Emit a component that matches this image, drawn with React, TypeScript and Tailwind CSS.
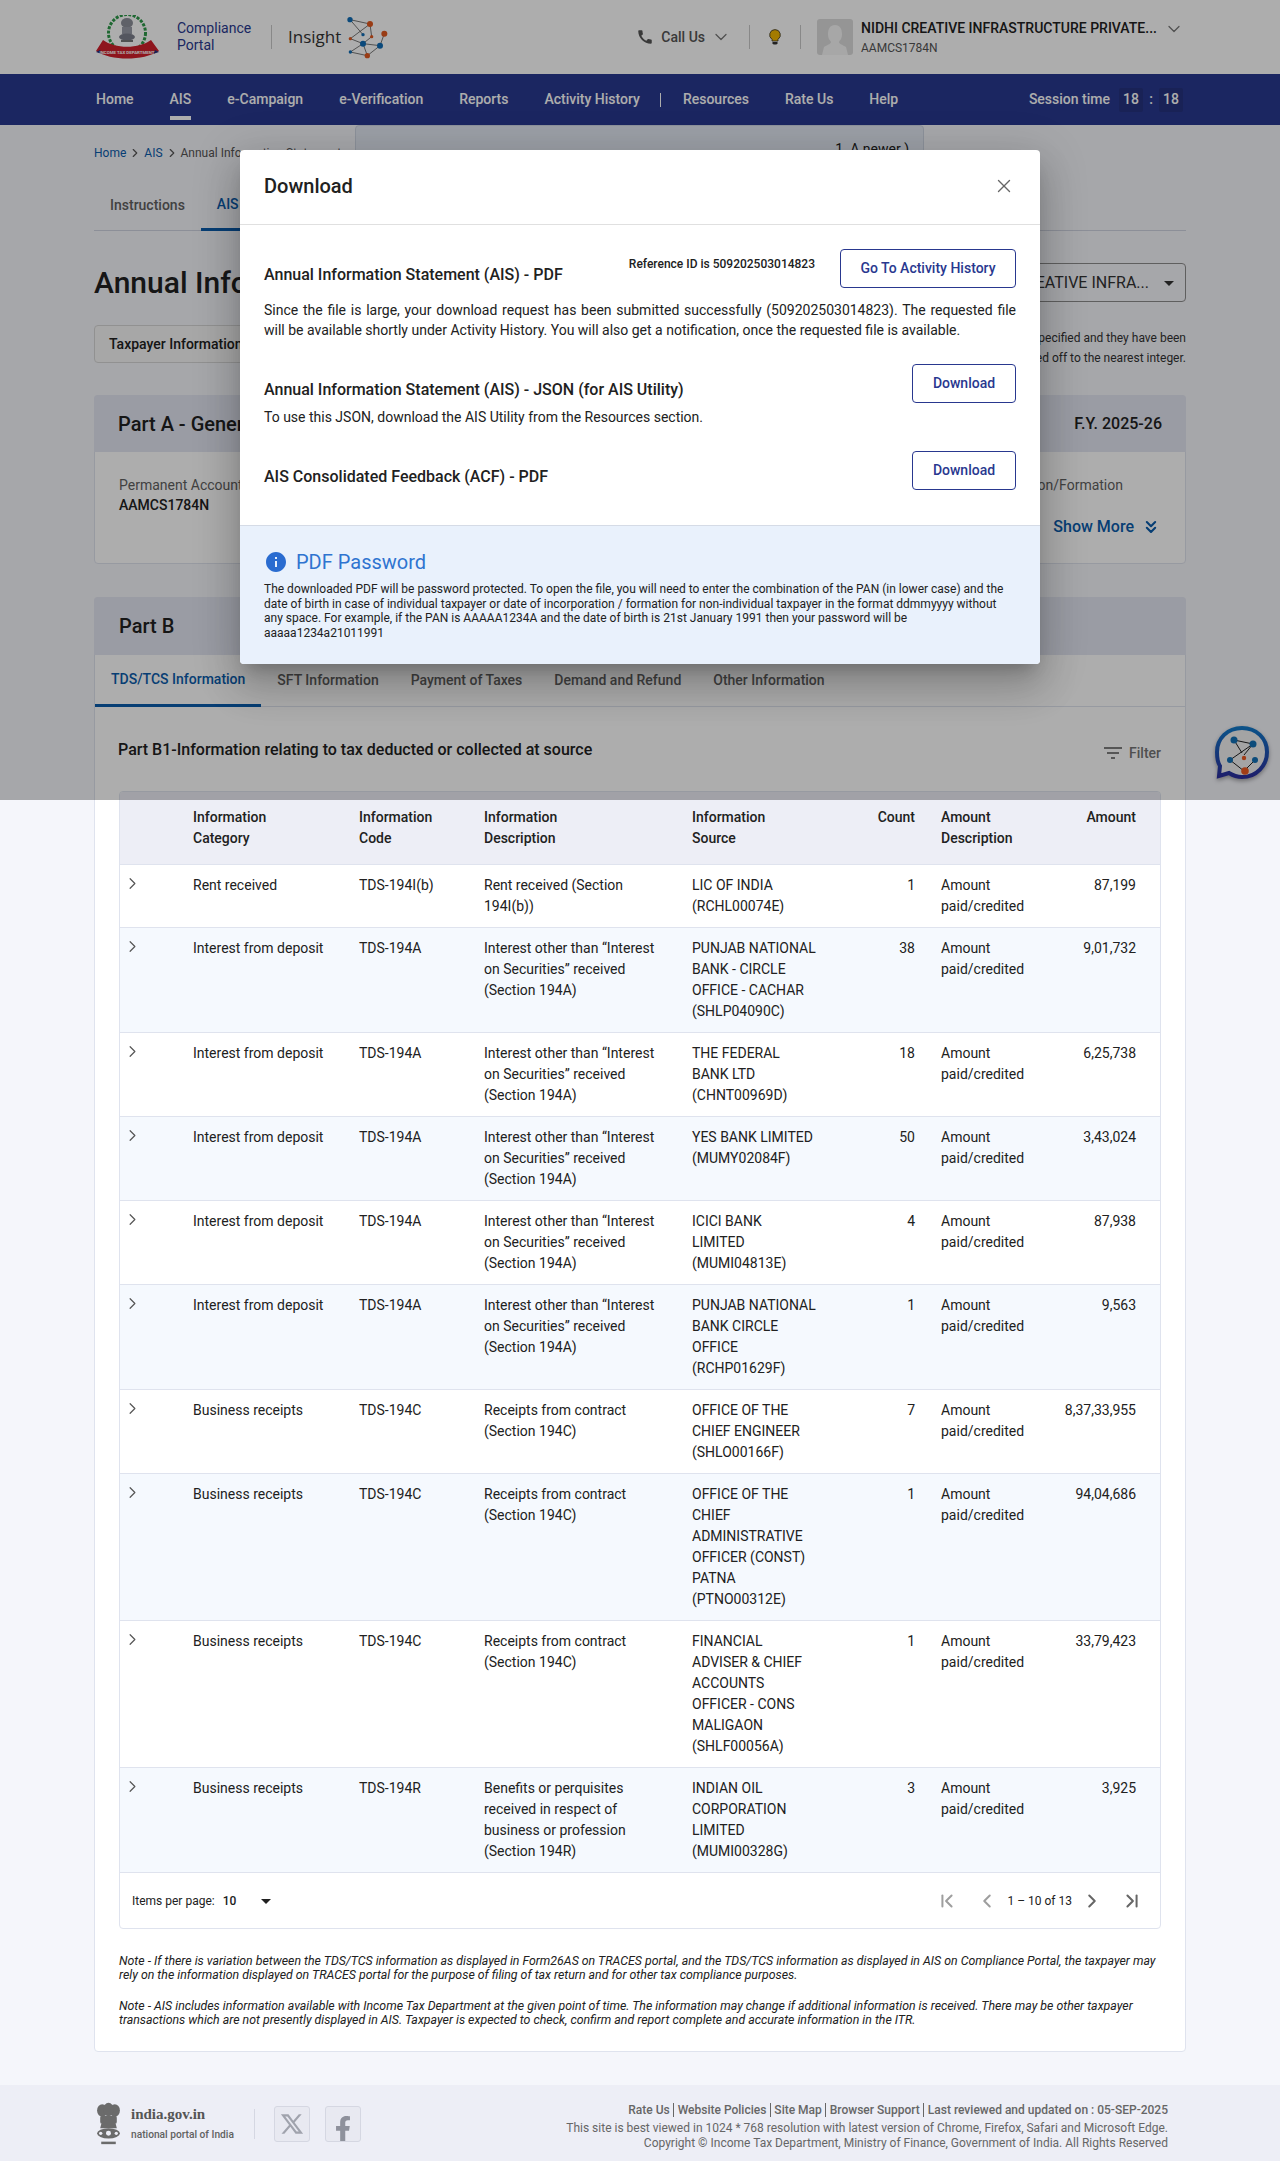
import React from "react";
import { ChevronDown, ChevronRight, ChevronFirst, ChevronLast, ChevronLeft, ChevronsDown, X } from "lucide-react";
import { MdCall, MdInfo, MdArrowDropDown } from "react-icons/md";
import { RiTwitterXLine } from "react-icons/ri";
import { FaFacebookF } from "react-icons/fa";

const interest = "Interest other than “Interest on Securities” received (Section 194A)";
const rows = [
  ["Rent received", "TDS-194I(b)", "Rent received (Section 194I(b))", "LIC OF INDIA (RCHL00074E)", "1", "87,199"],
  ["Interest from deposit", "TDS-194A", interest, "PUNJAB NATIONAL BANK - CIRCLE OFFICE - CACHAR (SHLP04090C)", "38", "9,01,732"],
  ["Interest from deposit", "TDS-194A", interest, "THE FEDERAL BANK LTD (CHNT00969D)", "18", "6,25,738"],
  ["Interest from deposit", "TDS-194A", interest, "YES BANK LIMITED (MUMY02084F)", "50", "3,43,024"],
  ["Interest from deposit", "TDS-194A", interest, "ICICI BANK LIMITED (MUMI04813E)", "4", "87,938"],
  ["Interest from deposit", "TDS-194A", interest, "PUNJAB NATIONAL BANK CIRCLE OFFICE (RCHP01629F)", "1", "9,563"],
  ["Business receipts", "TDS-194C", "Receipts from contract (Section 194C)", "OFFICE OF THE CHIEF ENGINEER (SHLO00166F)", "7", "8,37,33,955"],
  ["Business receipts", "TDS-194C", "Receipts from contract (Section 194C)", "OFFICE OF THE CHIEF ADMINISTRATIVE OFFICER (CONST) PATNA (PTNO00312E)", "1", "94,04,686"],
  ["Business receipts", "TDS-194C", "Receipts from contract (Section 194C)", "FINANCIAL ADVISER & CHIEF ACCOUNTS OFFICER - CONS MALIGAON (SHLF00056A)", "1", "33,79,423"],
  ["Business receipts", "TDS-194R", "Benefits or perquisites received in respect of business or profession (Section 194R)", "INDIAN OIL CORPORATION LIMITED (MUMI00328G)", "3", "3,925"],
];

function Network({ className }: { className?: string }) {
  const o = "#e2591f";
  const b = "#0f6cb5";
  return (
    <svg viewBox="860 40 132 138" className={className}>
      <g stroke="#333" strokeWidth="2" fill="none">
        <path d="M872 57L932 70L873 114L911 129L962 135L975 99M872 57L911 102M932 70L937 108L911 129L873 154L924 165L962 135M911 129L924 165" />
      </g>
      {[[872,57,8,b],[932,70,9,o],[975,99,9,o],[911,102,5,b],[937,108,5,o],[873,114,5,o],[911,129,9,b],[962,135,9,b],[873,154,5,b],[924,165,8,o]].map(([x,y,r,c],i)=>(
        <circle key={i} cx={x as number} cy={y as number} r={r as number} fill={c as string} />
      ))}
    </svg>
  );
}

function Emblem({ className, color = "#6b6b6b" }: { className?: string; color?: string }) {
  return (
    <svg viewBox="0 0 26 42" className={className} fill={color}>
      <ellipse cx="7" cy="8" rx="5" ry="6" />
      <ellipse cx="19" cy="8" rx="5" ry="6" />
      <ellipse cx="13" cy="7" rx="5" ry="6.500" />
      <rect x="5" y="13" width="16" height="8" rx="2" />
      <path d="M6 21h14l1 4H5z" />
      <ellipse cx="13" cy="30" rx="11" ry="5" />
      <circle cx="13" cy="30" r="2.400" fill="#edeef6" />
      <circle cx="5.500" cy="30" r="1.600" fill="#edeef6" />
      <circle cx="20.500" cy="30" r="1.600" fill="#edeef6" />
      <rect x="6" y="38" width="14" height="2.400" />
    </svg>
  );
}

function IncomeTaxLogo() {
  return (
    <svg viewBox="0 0 65 44" className="h-[44px] w-[65px] shrink-0">
      <circle cx="32" cy="18" r="18.500" fill="none" stroke="#2f9a4a" strokeWidth="3" strokeDasharray="3 1.400" />
      <ellipse cx="32" cy="8" rx="6" ry="5" fill="#8d8f9a" />
      <rect x="27" y="12" width="10" height="7" fill="#9a9ca8" />
      <ellipse cx="32" cy="22" rx="8" ry="3.500" fill="#7d7f8c" />
      <rect x="26" y="25" width="12" height="2" fill="#777" />
      <path d="M1 36L8 25C20 34 44 34 56 25L64 36C48 46 16 46 1 36Z" fill="#d21f2b" />
      <path d="M1 37L7 39L5 35ZM64 37L58 39L60 35Z" fill="#23307e" />
      <text x="32" y="39" textAnchor="middle" fontSize="4.400" fontWeight="700" fill="#fff">INCOME TAX DEPARTMENT</text>
    </svg>
  );
}

function ChatBot() {
  return (
    <svg viewBox="0 0 54 54" className="h-[54px] w-[54px]" style={{ filter: "drop-shadow(0 2px 2px rgba(0,0,0,.35))" }}>
      <defs>
        <linearGradient id="cb" x1="0" y1="0" x2="0" y2="1">
          <stop offset="0" stopColor="#1279c9" />
          <stop offset="1" stopColor="#2c2f9e" />
        </linearGradient>
      </defs>
      <path d="M27 3C12.500 3 2 13.500 2 27C2 33 3 38 5 41L4 51L14 48C18 50.500 22.500 52 27 52C41.500 52 52 40.500 52 27C52 13.500 41.500 3 27 3Z" fill="#f2f2f2" stroke="url(#cb)" strokeWidth="4" />
      <path d="M19 15L38 19L15 35L29 46L40 35M19 15L27 28M38 19L29 30" stroke="#222" strokeWidth="1" fill="none" />
      {[[19,15,3.500,"#1270b5"],[38,19,3.500,"#1270b5"],[15,35,3,"#1270b5"],[40,35,3,"#1270b5"],[29,33,2.200,"#ee5a22"],[30,46,3.800,"#ee5a22"]].map(([x,y,r,c],i)=>(
        <circle key={i} cx={x as number} cy={y as number} r={r as number} fill={c as string} />
      ))}
    </svg>
  );
}

function Header() {
  return (
    <header className="flex h-[74px] items-center bg-white pl-[95px]">
      <IncomeTaxLogo />
      <div className="ml-[17px] w-[78px] text-[14px] leading-[17px] text-[#29388f]">Compliance<br />Portal</div>
      <div className="ml-[16px] h-[24px] w-px bg-[#c9c9c9]" />
      <div className="ml-[16px] text-[17px] leading-[24px] text-[#333] [font-family:'Open_Sans',sans-serif]">Insight</div>
      <Network className="ml-[5px] h-[46px] w-[44px]" />
      <div className="ml-auto flex items-center pr-[96px]">
        <MdCall size={18} className="text-[#555]" />
        <span className="ml-[7px] text-[14px] font-medium text-[#555]">Call Us</span>
        <ChevronDown size={20} strokeWidth={1.500} className="ml-[6px] text-[#777]" />
        <div className="ml-[18px] h-[24px] w-px bg-[#c9c9c9]" />
        <svg viewBox="0 0 12 16" className="ml-[19px] h-[16px] w-[12px]">
          <path d="M6 .6a5.300 5.300 0 0 0-3 9.700V12h6v-1.700A5.300 5.300 0 0 0 6 .6Z" fill="#f0b600" stroke="#333" strokeWidth=".8" />
          <path d="M3.500 13h5v1.300l-1 1.200h-3l-1-1.200Z" fill="#333" />
        </svg>
        <div className="ml-[19px] h-[24px] w-px bg-[#c9c9c9]" />
        <svg viewBox="0 0 36 36" className="ml-[16px] h-[36px] w-[36px] rounded-[3px] bg-[#dcdcdc]">
          <path d="M18 6c-5 0-7 4-7 9s2 6 3 8c0 2-4 3-7 5l-2 8h26l-2-8c-3-2-7-3-7-5 1-2 3-3 3-8s-2-9-7-9Z" fill="#f6f6f6" />
        </svg>
        <div className="ml-[8px] w-[303px]">
          <div className="text-[14px] font-medium leading-[20px] text-[#212121]">NIDHI CREATIVE INFRASTRUCTURE PRIVATE...</div>
          <div className="mt-[1px] text-[12px] leading-[18px] text-[#555]">AAMCS1784N</div>
        </div>
        <ChevronDown size={20} strokeWidth={1.500} className="-mt-[16px] text-[#777]" />
      </div>
    </header>
  );
}

function Nav() {
  const items = ["Home", "AIS", "e-Campaign", "e-Verification", "Reports", "Activity History"];
  return (
    <nav className="flex h-[51px] items-center bg-[#29398f] pl-[96px] pr-[97px] text-[14px] font-medium text-white">
      <div className="flex gap-[36px]">
        {items.map((n) => (
          <div key={n} className="relative whitespace-nowrap">
            {n}
            {n === "AIS" && <div className="absolute left-0 right-0 top-[27px] h-[4px] bg-white" />}
          </div>
        ))}
      </div>
      <div className="ml-[20px] mr-[22px] h-[14px] w-px bg-white" />
      <div className="flex gap-[36px]">
        {["Resources", "Rate Us", "Help"].map((n) => <div key={n}>{n}</div>)}
      </div>
      <div className="ml-auto flex items-center">
        <span>Session time</span>
        <span className="ml-[9px] flex h-[24px] w-[24px] items-center justify-center rounded-[2px] bg-[#25337f]">18</span>
        <span className="w-[16px] text-center">:</span>
        <span className="flex h-[24px] w-[24px] items-center justify-center rounded-[2px] bg-[#25337f]">18</span>
      </div>
    </nav>
  );
}

function Modal() {
  const heading = "text-[16px] font-medium leading-[24px] text-[#212121]";
  const btn = "h-[39px] rounded-[4px] border border-[#29388f] bg-white text-[14px] font-medium text-[#29388f]";
  return (
    <div className="absolute left-[240px] top-[150px] z-20 w-[800px] overflow-hidden rounded-[4px] bg-white shadow-[0_11px_15px_-7px_rgba(0,0,0,0.2),0_24px_38px_3px_rgba(0,0,0,0.14),0_9px_46px_8px_rgba(0,0,0,0.12)]">
      <div className="flex h-[75px] items-center justify-between border-b border-[#e0e0e0] pb-[2px] pl-[24px] pr-[25px]">
        <div className="text-[20px] font-medium text-[#212121]">Download</div>
        <X size={22} strokeWidth={1.500} className="text-[#666]" />
      </div>
      <div className="px-[24px] pb-[35px] pt-[24px]">
        <div className="flex items-start">
          <div className={`${heading} mt-[14px]`}>Annual Information Statement (AIS) - PDF</div>
          <div className="ml-auto mt-[7px] text-[12px] font-medium leading-[16px] text-[#212121]">Reference ID is 509202503014823</div>
          <button className={`${btn} ml-[25px] w-[176px]`}>Go To Activity History</button>
        </div>
        <p className="mt-[12px] text-justify text-[14px] leading-[20px] text-[#212121]">
          Since the file is large, your download request has been submitted successfully (509202503014823). The requested file will be available shortly under Activity History. You will also get a notification, once the requested file is available.
        </p>
        <div className="mt-[24px] flex items-start justify-between">
          <div className={`${heading} mt-[14px]`}>Annual Information Statement (AIS) - JSON (for AIS Utility)</div>
          <button className={`${btn} w-[104px]`}>Download</button>
        </div>
        <p className="mt-[4px] text-[14px] leading-[20px] text-[#212121]">To use this JSON, download the AIS Utility from the Resources section.</p>
        <div className="mt-[24px] flex items-start justify-between">
          <div className={`${heading} mt-[14px]`}>AIS Consolidated Feedback (ACF) - PDF</div>
          <button className={`${btn} w-[104px]`}>Download</button>
        </div>
      </div>
      <div className="border-t border-[#d5dbe6] bg-[#e9f1fc] px-[24px] pb-[24px] pt-[24px]">
        <div className="flex h-[24px] items-center">
          <MdInfo size={24} className="text-[#2a6cd0]" />
          <span className="ml-[8px] text-[20px] leading-[24px] text-[#2f74d0]">PDF Password</span>
        </div>
        <p className="mt-[8px] text-[12px] leading-[14.500px] text-[#212121]">
          The downloaded PDF will be password protected. To open the file, you will need to enter the combination of the PAN (in lower case) and the date of birth in case of individual taxpayer or date of incorporation / formation for non-individual taxpayer in the format ddmmyyyy without any space. For example, if the PAN is AAAAA1234A and the date of birth is 21st January 1991 then your password will be aaaaa1234a21011991
        </p>
      </div>
    </div>
  );
}

function DataTable() {
  const th = "px-0 py-[15px] text-[14px] font-medium leading-[21px] text-[#212121] align-top";
  const td = "py-[10px] text-[14px] leading-[21px] text-[#212121] align-top";
  return (
    <div className="mx-[24px] overflow-hidden rounded-[4px] border border-[#dfe3ee] bg-white">
      <table className="w-full table-fixed border-collapse">
        <colgroup>
          <col className="w-[73px]" />
          <col className="w-[166px]" />
          <col className="w-[125px]" />
          <col className="w-[208px]" />
          <col className="w-[148px]" />
          <col className="w-[101px]" />
          <col className="w-[119px]" />
          <col />
        </colgroup>
        <thead>
          <tr className="border-b border-[#dfe3ee] bg-[#edeef6] text-left">
            <th className={th}></th>
            <th className={th}>Information<br />Category</th>
            <th className={th}>Information<br />Code</th>
            <th className={th}>Information<br />Description</th>
            <th className={th}>Information<br />Source</th>
            <th className={`${th} pr-[26px] text-right`}>Count</th>
            <th className={th}>Amount<br />Description</th>
            <th className={`${th} pr-[24px] text-right`}>Amount</th>
          </tr>
        </thead>
        <tbody>
          {rows.map((r, i) => (
            <tr key={i} className={`border-b border-[#dfe3ee] ${i % 2 ? "bg-[#f5f9fe]" : "bg-white"}`}>
              <td className="align-top pl-[3px] pt-[9px]"><ChevronRight size={19} strokeWidth={1.500} className="text-[#555]" /></td>
              <td className={td}>{r[0]}</td>
              <td className={td}>{r[1]}</td>
              <td className={`${td} pr-[28px]`}>{r[2]}</td>
              <td className={`${td} pr-[23px]`}>{r[3]}</td>
              <td className={`${td} pr-[26px] text-right`}>{r[4]}</td>
              <td className={`${td} pr-[30px]`}>Amount paid/credited</td>
              <td className={`${td} pr-[24px] text-right`}>{r[5]}</td>
            </tr>
          ))}
        </tbody>
      </table>
      <div className="flex h-[55px] items-center pl-[12px] pr-[17px] text-[12px] text-[#212121]">
        <span>Items per page:</span>
        <span className="ml-[8px] font-medium">10</span>
        <MdArrowDropDown size={24} className="ml-[18px] text-[#212121]" />
        <div className="ml-auto flex items-center">
          <ChevronFirst size={22} strokeWidth={2.200} className="text-[#9e9e9e]" />
          <ChevronLeft size={22} strokeWidth={2.200} className="ml-[18px] text-[#9e9e9e]" />
          <span className="ml-[9px]">1 – 10 of 13</span>
          <ChevronRight size={22} strokeWidth={2.200} className="ml-[9px] text-[#666]" />
          <ChevronLast size={22} strokeWidth={2.200} className="ml-[18px] text-[#666]" />
        </div>
      </div>
    </div>
  );
}

function FooterSep() {
  return <span className="mx-[3.500px] inline-block h-[14px] w-px bg-[#666] align-[-3px]" />;
}

export default function App() {
  return (
    <div className="relative min-h-[2161px] w-full bg-[#f5f6fb] [font-family:Roboto,sans-serif]">
      <Header />
      <Nav />
      <main className="px-[94px]">
        <div className="mt-[20px] flex h-[16px] items-center text-[12px] leading-[16px]">
          <span className="text-[#0b5cab]">Home</span>
          <ChevronRight size={14} className="mx-[2px] text-[#555]" />
          <span className="text-[#0b5cab]">AIS</span>
          <ChevronRight size={14} className="mx-[2px] text-[#555]" />
          <span className="text-[#555]">Annual Information Statement</span>
        </div>
        <div className="mt-[20px] flex h-[50px] border-b border-[#cfd3e0] text-[14px] font-medium">
          <div className="flex h-[49px] items-center px-[16px] text-[#616161]">Instructions</div>
          <div className="flex h-[50px] items-center border-b-[3px] border-[#0b5cab] px-[16px] text-[#0b5cab]">AIS</div>
        </div>
        <div className="mt-[32px] flex h-[39px] items-center justify-between">
          <h1 className="text-[30px] font-medium leading-[40px] text-[#212121]">Annual Information Statement (AIS)</h1>
          <div className="flex h-[39px] w-[300px] items-center justify-end rounded-[4px] border border-[#8d8d8d] pr-[4px] text-[16px] text-[#333]">
            NIDHI CREATIVE INFRA...
            <MdArrowDropDown size={24} className="ml-[8px] text-[#333]" />
          </div>
        </div>
        <div className="mt-[23px] flex h-[40px] items-start justify-between">
          <div className="flex h-[38px] w-[300px] items-center rounded-[4px] border border-[#d6d6d6] bg-[#f7f7f7] pl-[14px] text-[14px] font-medium text-[#212121]">Taxpayer Information Summary</div>
          <div className="mt-[3px] text-right text-[12px] leading-[20px] text-[#333]">
            All amounts are in INR, unless otherwise specified and they have been<br />rounded off to the nearest integer.
          </div>
        </div>
        <section className="mt-[30px] rounded-[4px] border border-[#dfe3ee] bg-white">
          <div className="-m-px flex h-[57px] items-center justify-between rounded-t-[4px] bg-[#e4e6f2] px-[24px]">
            <div className="text-[20px] font-medium text-[#212121]">Part A - General</div>
            <div className="text-[16px] font-medium text-[#212121]">F.Y. 2025-26</div>
          </div>
          <div className="flex h-[112px] justify-between pl-[24px] pr-[62px] pt-[24px] text-[14px] leading-[20px]">
            <div>
              <div className="text-[#616161]">Permanent Account Number (PAN)</div>
              <div className="font-medium text-[#212121]">AAMCS1784N</div>
            </div>
            <div className="text-[#616161]">Date of Incorporation/Formation</div>
          </div>
          <div className="-mt-[48px] flex h-[24px] items-center justify-end pr-[24px] text-[16px] font-medium text-[#0b5cab]">
            Show More
            <ChevronsDown size={20} strokeWidth={2.500} className="ml-[7px]" />
          </div>
          <div className="h-[24px]" />
        </section>
        <section className="mt-[33px] rounded-[4px] border border-[#dfe3ee] bg-white">
          <div className="-m-px flex h-[58px] items-center rounded-t-[4px] bg-[#e4e6f2] px-[25px] text-[20px] font-medium text-[#212121]">Part B</div>
          <div className="flex h-[53px] border-b border-[#dfe3ee] text-[14px] font-medium text-[#616161]">
            <div className="flex h-[53px] items-center border-b-[3px] border-[#0b5cab] px-[16px] text-[#0b5cab]">TDS/TCS Information</div>
            <div className="flex items-center px-[16px]">SFT Information</div>
            <div className="flex items-center px-[16px]">Payment of Taxes</div>
            <div className="flex items-center px-[16px]">Demand and Refund</div>
            <div className="flex items-center px-[16px]">Other Information</div>
          </div>
          <div className="flex h-[84px] items-start justify-between pl-[23px] pr-[24px] pt-[31px]">
            <h2 className="text-[16px] font-medium leading-[24px] text-[#212121]">Part B1-Information relating to tax deducted or collected at source</h2>
            <div className="mt-[5px] flex items-center text-[14px] font-medium leading-[20px] text-[#757575]">
              <svg viewBox="0 0 18 14" className="mr-[7px] h-[14px] w-[18px]" fill="none" stroke="#555" strokeWidth="1.500">
                <path d="M0 2h18M3 7h12M7 12h4" />
              </svg>
              Filter
            </div>
          </div>
          <DataTable />
          <div className="px-[24px] pb-[24px] pt-[25px] text-[12.350px] italic leading-[14px] text-[#212121]">
            <p>Note - If there is variation between the TDS/TCS information as displayed in Form26AS on TRACES portal, and the TDS/TCS information as displayed in AIS on Compliance Portal, the taxpayer may rely on the information displayed on TRACES portal for the purpose of filing of tax return and for other tax compliance purposes.</p>
            <p className="mt-[17px]">Note - AIS includes information available with Income Tax Department at the given point of time. The information may change if additional information is received. There may be other taxpayer transactions which are not presently displayed in AIS. Taxpayer is expected to check, confirm and report complete and accurate information in the ITR.</p>
          </div>
        </section>
      </main>
      <footer className="mt-[33px] flex h-[77px] items-center bg-[#edeef6] pl-[95px] pr-[112px]">
        <Emblem className="h-[44px] w-[27px]" />
        <div className="ml-[9px]">
          <div className="text-[15px] font-bold leading-[18px] text-[#555] [font-family:'Liberation_Serif',serif]">india.gov.in</div>
          <div className="mt-[5px] text-[10.200px] font-medium leading-[14px] text-[#616161]">national portal of India</div>
        </div>
        <div className="ml-[20px] h-[30px] w-px bg-[#d5d7e2]" />
        <div className="ml-[19px] flex h-[36px] w-[36px] items-center justify-center rounded-[3px] border border-[#d5d7e2] bg-[#e8e9f1]">
          <RiTwitterXLine size={26} className="text-[#a0a3ad]" />
        </div>
        <div className="ml-[15px] flex h-[36px] w-[36px] items-end justify-center overflow-hidden rounded-[3px] border border-[#d5d7e2] bg-[#e8e9f1]">
          <FaFacebookF size={26} className="-mb-[1px] text-[#8e919c]" />
        </div>
        <div className="ml-auto mt-[6px] text-right text-[12px] leading-[15px] text-[#666]">
          <div className="mb-[3px] font-medium">Rate Us<FooterSep />Website Policies<FooterSep />Site Map<FooterSep />Browser Support<FooterSep />Last reviewed and updated on : 05-SEP-2025</div>
          <div>This site is best viewed in 1024 * 768 resolution with latest version of Chrome, Firefox, Safari and Microsoft Edge.</div>
          <div>Copyright © Income Tax Department, Ministry of Finance, Government of India. All Rights Reserved</div>
        </div>
      </footer>

      <div className="absolute left-[355px] top-[125px] h-[80px] w-[569px] rounded-t-[4px] border border-[#cfd6e4] bg-[#e5ebf5] pr-[14px] pt-[13px] text-right text-[14px] text-[#212121]">1. A newer )</div>
      <div className="absolute left-[1215px] top-[725px]"><ChatBot /></div>
      <div className="absolute left-0 top-0 z-10 h-[800px] w-full bg-[rgba(0,0,0,0.32)]" />
      <Modal />
    </div>
  );
}
